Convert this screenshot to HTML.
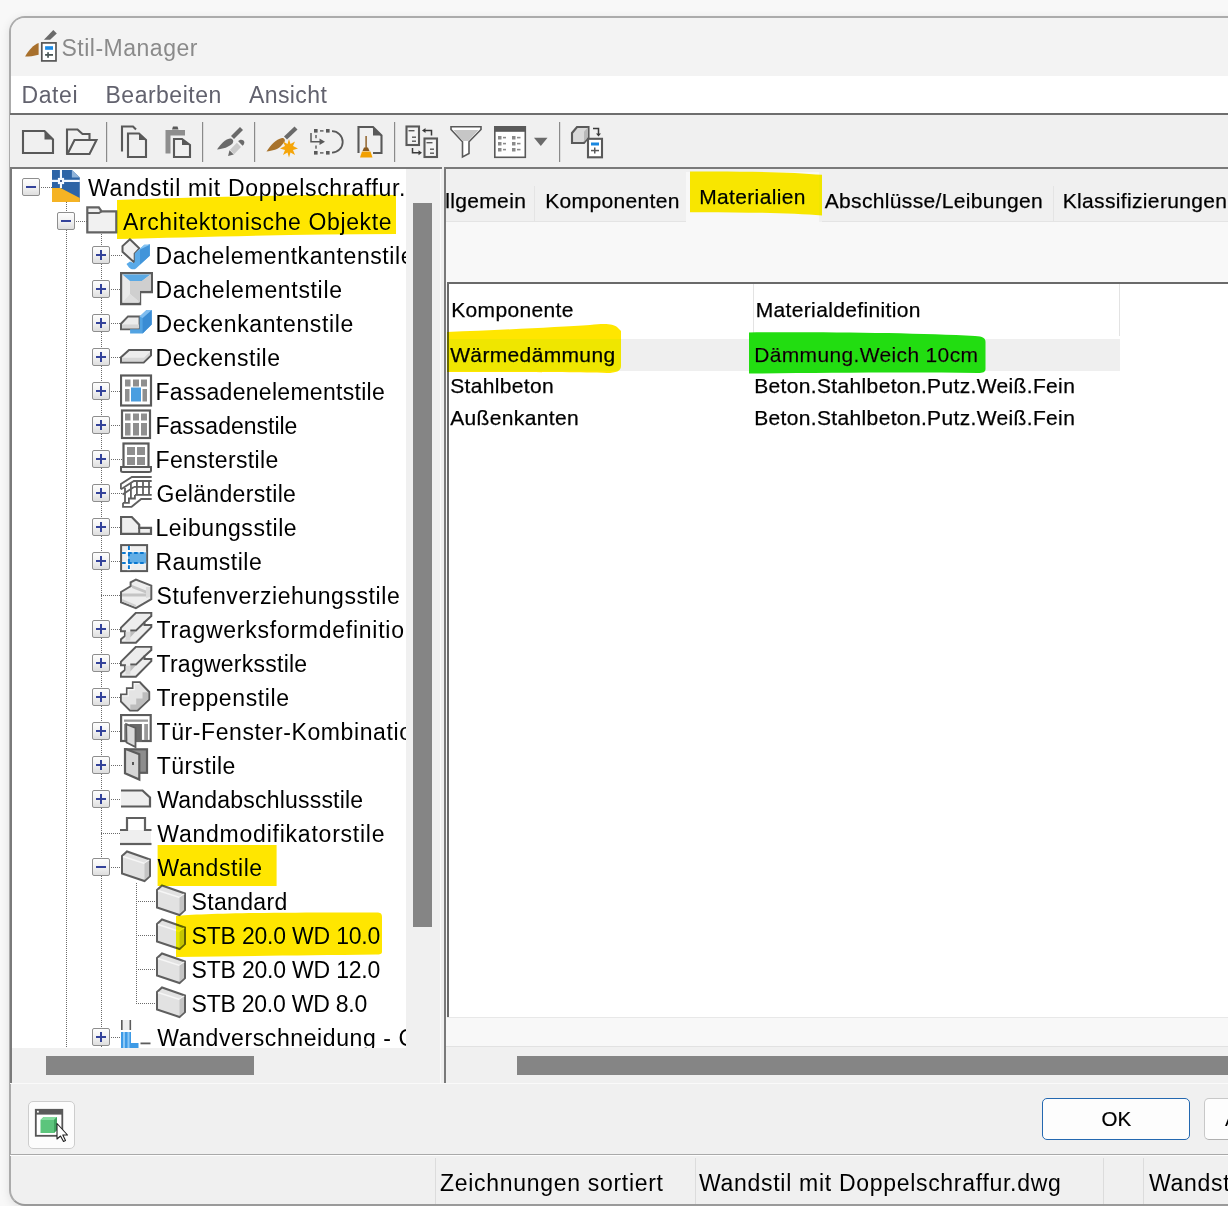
<!DOCTYPE html>
<html><head><meta charset="utf-8">
<style>
*{margin:0;padding:0;box-sizing:border-box}
html,body{width:1228px;height:1206px;overflow:hidden;background:#f8f8f8;font-family:"Liberation Sans",sans-serif;position:relative}
.a{position:absolute}
.t{position:absolute;white-space:nowrap;line-height:1}
.tr{font-size:23px;color:#000;letter-spacing:0.35px}
.rp{font-size:21px;color:#000;letter-spacing:0.35px;-webkit-text-stroke:0.25px #000}
.sb{font-size:23px;color:#000;letter-spacing:0.7px}
.dv{position:absolute;width:1px;background:repeating-linear-gradient(to bottom,#6a6a6a 0 1px,transparent 1px 2px)}
.dh{position:absolute;height:1px;background:repeating-linear-gradient(to right,#6a6a6a 0 1px,transparent 1px 2px)}
.ex{position:absolute;width:18px;height:18px;border:1px solid #8e8e8e;border-radius:2px;background:linear-gradient(to bottom,#fdfdfd 0,#f2f2f2 50%,#dedede 100%)}
.hm{position:absolute;left:3px;top:7px;width:10px;height:2px;background:#34439a}
.vm{position:absolute;left:7px;top:3px;width:2px;height:10px;background:#34439a}
</style></head><body>
<div class="a" style="left:9px;top:16px;width:1240px;height:1190px;border:2px solid #ababab;border-bottom:2px solid #9a9a9a;border-radius:16px;background:#f0f0f0;overflow:hidden;box-shadow:0 2px 10px rgba(0,0,0,0.10)">
  <div class="a" style="left:0;top:0;width:1240px;height:59px;background:#f3f3f3"></div>
</div>

<svg class="a" style="left:20px;top:28px" width="42" height="38" viewBox="20 28 42 38">
 <path d="M43.9 39.7L53.3 30.1L56.8 33.4L50.1 39.7Z" fill="#6a6a6a"/>
 <path d="M25.1 56.6C29 50 33.5 45 38.6 43.1V54.7C34 56 29 56.6 25.1 56.6Z" fill="#a8702c"/>
 <rect x="41.8" y="42.9" width="14.2" height="18" fill="#fff" stroke="#555" stroke-width="1.7"/>
 <rect x="45.1" y="46.2" width="7.9" height="3.6" fill="#1a8ae6"/>
 <rect x="45.1" y="54" width="7.9" height="1.8" fill="#4a5656"/><rect x="47.2" y="52.2" width="1.7" height="5.6" fill="#4a5656"/>
</svg>

<div class="t" style="left:61.5px;top:36.6px;font-size:23px;color:#8a8a8a;letter-spacing:0.5px">Stil-Manager</div>
<div class="a" style="left:11px;top:76px;width:1217px;height:37px;background:#fff"></div>
<div class="t" style="left:21.5px;top:83.8px;font-size:23px;color:#62626e;letter-spacing:0.6px">Datei</div>
<div class="t" style="left:105.5px;top:83.8px;font-size:23px;color:#62626e;letter-spacing:0.5px">Bearbeiten</div>
<div class="t" style="left:249px;top:83.8px;font-size:23px;color:#62626e;letter-spacing:0.4px">Ansicht</div>
<div class="a" style="left:10px;top:113px;width:1218px;height:2px;background:#6e6e6e"></div>
<div class="a" style="left:10px;top:115px;width:1218px;height:52px;background:#f0f0f0"></div>

<svg class="a" style="left:10px;top:115px" width="600" height="52" viewBox="10 115 600 52">
 <!-- new doc -->
 <path d="M23 131H44.5L53 139.5V153H23Z" fill="none" stroke="#595959" stroke-width="2.1"/>
 <path d="M44.5 131L53 139.5H44.5Z" fill="#595959"/>
 <!-- open folder -->
 <path d="M89.5 139V134H82.5L77.5 129.5H67V154" fill="none" stroke="#595959" stroke-width="2.1"/>
 <path d="M74.5 140H96.5L89.5 154H67.5Z" fill="none" stroke="#595959" stroke-width="2.1"/>
 <rect x="106" y="122" width="1.2" height="40" fill="#8a8a8a"/>
 <!-- copy -->
 <path d="M122 151.5V126.5H133L136 129.5" fill="none" stroke="#595959" stroke-width="2.1"/>
 <path d="M128 133.5H139L146 140V157H128Z" fill="#f0f0f0" stroke="#595959" stroke-width="2.1"/>
 <path d="M139 133.5L146 140H139Z" fill="#595959"/>
 <!-- paste -->
 <path d="M165.5 130H185V135.5H170.5V153.5H165.5Z" fill="#8e8e8e"/>
 <path d="M172 129.5L173 126.5H177.5L178.5 129.5Z" fill="#595959"/>
 <path d="M174 139H182L190 145V157H174Z" fill="#f0f0f0" stroke="#595959" stroke-width="2.1"/>
 <path d="M182 139L190 145H182Z" fill="#595959"/>
 <rect x="202" y="122" width="1.2" height="40" fill="#8a8a8a"/>
 <!-- brush + pencil -->
 <path d="M231 136L240 127L243 130L234 139Z" fill="#6a6a6a"/>
 <path d="M217 149.5C220 145 225 139 230 138.5C233 138.5 234 141 232.5 143.5C229 147 223 149 217 149.5Z" fill="#6a6a6a"/>
 <path d="M230 149.8L236.9 142.8L241 146.9L234.1 154.2Z" fill="#c9c9c9"/>
 <path d="M238.2 141.2C239.5 139.5 242 139.2 243.5 140.6C245 142 244.6 144.4 242.6 145.7Z" fill="#6a6a6a"/>
 <path d="M229.5 150.2L233.8 154.5L228.1 155.9Z" fill="#6a6a6a"/>
 <rect x="254" y="122" width="1.2" height="40" fill="#8a8a8a"/>
 <!-- brush star -->
 <path d="M284 136.5L294.5 126.5L297.5 129.5L287 139.5Z" fill="#6a6a6a"/>
 <path d="M266.5 151.5C270 146 276 139 282 138C284.5 138 285.5 140 284.5 142L281 146C279 149 272 151 266.5 151.5Z" fill="#a8732c"/>
 <path d="M289 139L290.5 144L295 141.5L293 146L298 148.5L293 150L295 155L290.5 152.5L289 157.5L287.5 152.5L283 155L285 150L280 148.5L285 146L283 141.5L287.5 144Z" fill="#f5a50a"/>
 <!-- dashed select with arrow -->
 <g fill="#595959">
  <rect x="314" y="129" width="3.6" height="3.6"/><rect x="326" y="129" width="3.6" height="3.6"/>
  <rect x="314" y="151" width="3.6" height="3.6"/><rect x="326" y="151" width="3.6" height="3.6"/>
  <rect x="320" y="130.2" width="3.5" height="1.4"/><rect x="320" y="152.2" width="3.5" height="1.4"/>
  <rect x="315.3" y="135" width="1.4" height="3.2"/><rect x="315.3" y="145.5" width="1.4" height="3.2"/>
 </g>
 <path d="M332 131.2A10.6 10.6 0 0 1 332 152.6" fill="none" stroke="#595959" stroke-width="1.8"/>
 <path d="M311 133V141.7H320" fill="none" stroke="#595959" stroke-width="1.5"/>
 <path d="M319.5 138.5L325 141.7L319.5 145Z" fill="#595959"/>
 <!-- doc with broom -->
 <path d="M358.5 153V127H373L381.5 135.5V153H373" fill="none" stroke="#595959" stroke-width="2.1"/>
 <path d="M373 127L381.5 135.5H373Z" fill="#595959"/>
 <rect x="365.4" y="136" width="1.4" height="12" fill="#8a5a1e"/>
 <path d="M364 147.5H368L369.5 151H362.5Z" fill="#8a5a1e"/>
 <path d="M362 151.5H370.5L372.5 157.5H360Z" fill="#f2a000"/>
 <rect x="394" y="122" width="1.2" height="40" fill="#8a8a8a"/>
 <!-- docs swap -->
 <rect x="406.5" y="126.5" width="12.5" height="18.5" fill="#f4f4f4" stroke="#595959" stroke-width="2.1"/>
 <rect x="408.5" y="130" width="6" height="1.4" fill="#595959"/><rect x="412" y="136.5" width="4" height="1.4" fill="#595959"/><rect x="412" y="140.5" width="4" height="1.4" fill="#595959"/>
 <rect x="424.5" y="138.5" width="12.5" height="18.5" fill="#f4f4f4" stroke="#595959" stroke-width="2.1"/>
 <rect x="426.5" y="142" width="6" height="1.4" fill="#595959"/><rect x="430" y="148.5" width="4" height="1.4" fill="#595959"/><rect x="430" y="152.5" width="4" height="1.4" fill="#595959"/>
 <path d="M431.5 135.5V130.5H425" fill="none" stroke="#3a3a3a" stroke-width="1.5"/><path d="M425.5 128L422 130.5L425.5 133Z" fill="#3a3a3a"/>
 <path d="M412.5 148V152.8H419" fill="none" stroke="#3a3a3a" stroke-width="1.5"/><path d="M418.5 150.3L422 152.8L418.5 155.3Z" fill="#3a3a3a"/>
 <!-- funnel -->
 <path d="M451 126.8H481V129.5L469 141.8V153.5L462.5 157V141.8L451 129.5Z" fill="#fff" stroke="#595959" stroke-width="1.6"/>
 <path d="M453.5 130H478.5L468.5 141H462.5Z" fill="#c6c6c6"/>
 <!-- table -->
 <rect x="494.8" y="126.8" width="30.5" height="30.5" fill="#fff" stroke="#595959" stroke-width="1.6"/>
 <rect x="494" y="126" width="32" height="5.8" fill="#595959"/>
 <g fill="#8a8a8a">
  <rect x="498" y="136" width="3.5" height="3.5"/><rect x="503" y="136.8" width="3" height="1.6"/><rect x="512" y="136" width="3.5" height="3.5"/><rect x="517" y="136.8" width="3.5" height="1.6"/>
  <rect x="498" y="142" width="3.5" height="3.5"/><rect x="503" y="142.8" width="3" height="1.6"/><rect x="512" y="142" width="3.5" height="3.5"/><rect x="517" y="142.8" width="3.5" height="1.6"/>
  <rect x="498" y="148" width="3.5" height="3.5"/><rect x="503" y="148.8" width="3" height="1.6"/><rect x="512" y="148" width="3.5" height="3.5"/><rect x="517" y="148.8" width="3.5" height="1.6"/>
 </g>
 <path d="M534 137.8H547.5L540.8 146Z" fill="#6a6a6a"/>
 <rect x="559" y="122" width="1.2" height="40" fill="#8a8a8a"/>
 <!-- cube + doc -->
 <path d="M572 133L577 127H588.5V137.5L584 143H572Z" fill="#d9d9d9" stroke="#595959" stroke-width="2.1"/>
 <path d="M584 131.5L588 127.5V137.5L584 142Z" fill="#b8b8b8"/>
 <path d="M593 128.5H598.5V134" fill="none" stroke="#3a3a3a" stroke-width="1.5"/><path d="M596 133.5L598.5 136.5L601 133.5Z" fill="#3a3a3a"/>
 <rect x="588" y="138.8" width="14" height="18.5" fill="#fff" stroke="#595959" stroke-width="2.1"/>
 <rect x="591" y="142.5" width="8" height="3" fill="#1a88e0"/>
 <rect x="591" y="149.8" width="8" height="1.5" fill="#595959"/><rect x="594" y="147.5" width="1.5" height="6" fill="#595959"/>
</svg>

<div class="a" style="left:10px;top:167px;width:432px;height:916px;border:2px solid #7a7a7a;border-right:none;border-bottom:none;background:#f0f0f0"></div>
<div class="a" style="left:12px;top:169px;width:394px;height:879px;background:#fff;overflow:hidden">
 <div class="a" style="left:-12px;top:-169px;width:1228px;height:1206px">
<div class="dv" style="left:65.5px;top:202px;height:846px"></div>
<div class="dv" style="left:100.5px;top:234px;height:814px"></div>
<div class="dv" style="left:135.5px;top:883px;height:121px"></div>
<div class="dh" style="left:31px;top:186.5px;width:21px"></div>
<div class="dh" style="left:66px;top:220.5px;width:21px"></div>
<div class="dh" style="left:101px;top:254.5px;width:21px"></div>
<div class="dh" style="left:101px;top:288.5px;width:21px"></div>
<div class="dh" style="left:101px;top:322.5px;width:21px"></div>
<div class="dh" style="left:101px;top:356.5px;width:21px"></div>
<div class="dh" style="left:101px;top:390.5px;width:21px"></div>
<div class="dh" style="left:101px;top:424.5px;width:21px"></div>
<div class="dh" style="left:101px;top:458.5px;width:21px"></div>
<div class="dh" style="left:101px;top:492.5px;width:21px"></div>
<div class="dh" style="left:101px;top:526.5px;width:21px"></div>
<div class="dh" style="left:101px;top:560.5px;width:21px"></div>
<div class="dh" style="left:101px;top:594.5px;width:21px"></div>
<div class="dh" style="left:101px;top:628.5px;width:21px"></div>
<div class="dh" style="left:101px;top:662.5px;width:21px"></div>
<div class="dh" style="left:101px;top:696.5px;width:21px"></div>
<div class="dh" style="left:101px;top:730.5px;width:21px"></div>
<div class="dh" style="left:101px;top:764.5px;width:21px"></div>
<div class="dh" style="left:101px;top:798.5px;width:21px"></div>
<div class="dh" style="left:101px;top:832.5px;width:21px"></div>
<div class="dh" style="left:101px;top:866.5px;width:21px"></div>
<div class="dh" style="left:136px;top:900.5px;width:21px"></div>
<div class="dh" style="left:136px;top:934.5px;width:21px"></div>
<div class="dh" style="left:136px;top:968.5px;width:21px"></div>
<div class="dh" style="left:136px;top:1002.5px;width:21px"></div>
<div class="dh" style="left:101px;top:1036.5px;width:21px"></div>
<div class="ex" style="left:22px;top:178px"><i class="hm"></i></div>
<svg class="a" style="left:50px;top:170px" width="33" height="35" viewBox="0 0 33 35"><path d="M2 0H21.9L29.8 7.6V31.9H2Z" fill="#2d64a6"/><path d="M21.9 0L29.8 7.6H21.9Z" fill="#8fb3da"/>
   <path d="M2 18H10.5L29.8 27.9V31.9H2Z" fill="#f5b324"/>
   <rect x="9.9" y="0" width="2.1" height="18" fill="#f4f8ff"/><rect x="2" y="9.8" width="27.8" height="2.2" fill="#f4f8ff"/>
   <rect x="7.9" y="7.9" width="6.2" height="6.2" fill="#f4f8ff"/><rect x="10.1" y="10.1" width="1.8" height="1.8" fill="#1e3f7a"/></svg>
<div class="t tr" style="left:88px;top:177.1px;letter-spacing:0.7px">Wandstil mit Doppelschraffur.</div>
<div class="ex" style="left:57px;top:212px"><i class="hm"></i></div>
<svg class="a" style="left:85px;top:204px" width="33" height="35" viewBox="0 0 33 35"><path d="M2.3 3.4H13.8L16.6 7.4H31.3V28.4H2.3Z" fill="#f1f1f1" stroke="#636363" stroke-width="2.2"/>
   <path d="M2.3 9H14L16.8 7.2" fill="none" stroke="#636363" stroke-width="2"/></svg>
<div class="t tr" style="left:123px;top:211.1px;letter-spacing:0.61px">Architektonische Objekte</div>
<div class="ex" style="left:92px;top:246px"><i class="hm"></i><i class="vm"></i></div>
<svg class="a" style="left:120px;top:238px" width="33" height="35" viewBox="0 0 33 35"><path d="M9.9 1.3L19.5 10.5L14.7 15.6V24H13.8L2.5 13.8V8.1Z" fill="#f0f0f0" stroke="#5a5a5a" stroke-width="2"/>
   <path d="M14.7 15.6L24.3 6.7H29.8V17.7L16 30.5C14 32 11 31.5 9 29.5L6.5 26L10 23.5L13.8 25L14.7 24Z" fill="#5aaae8"/>
   <path d="M20 11L29.8 6V17.7L20 26.5Z" fill="#4295da"/>
   <path d="M14.7 15.6L24.3 6.7H29.8L20 11.5Z" fill="#86c4f2"/></svg>
<div class="t tr" style="left:155.5px;top:245.1px;letter-spacing:0.6px">Dachelementkantenstile</div>
<div class="ex" style="left:92px;top:280px"><i class="hm"></i><i class="vm"></i></div>
<svg class="a" style="left:120px;top:272px" width="33" height="35" viewBox="0 0 33 35"><path d="M1 1H32V20H20V32H1Z" fill="#e9e9e9" stroke="#5c5c5c" stroke-width="2.4"/>
   <path d="M2.5 2.5H30.5L22 9H10Z" fill="#5ba9e4"/>
   <path d="M10 9H22L30.5 2.5V18.5H20V30.5L10 22Z" fill="#cfcfcf"/>
   <path d="M10 22L20 30.5H2.5Z" fill="#dedede"/></svg>
<div class="t tr" style="left:155.5px;top:279.1px;letter-spacing:0.67px">Dachelementstile</div>
<div class="ex" style="left:92px;top:314px"><i class="hm"></i><i class="vm"></i></div>
<svg class="a" style="left:120px;top:306px" width="33" height="35" viewBox="0 0 33 35"><path d="M1 17.7L8 10.4H19.6V23.3H1Z" fill="#ececec" stroke="#5f5f5f" stroke-width="2"/>
   <path d="M2 18.5H19V22.3H2Z" fill="#d5d5d5"/>
   <path d="M19.6 10.4L26.5 3.9H31.7V18.6L22.6 27.6H10.1V23.3H19.6Z" fill="#52a3e2"/>
   <path d="M22.6 12V27.6L31.7 18.6V3.9Z" fill="#3a8cd4"/><path d="M19.6 10.4L26.5 3.9H31.7L22.6 12Z" fill="#7fbdf0"/></svg>
<div class="t tr" style="left:155.5px;top:313.1px;letter-spacing:0.61px">Deckenkantenstile</div>
<div class="ex" style="left:92px;top:348px"><i class="hm"></i><i class="vm"></i></div>
<svg class="a" style="left:120px;top:340px" width="33" height="35" viewBox="0 0 33 35"><path d="M1 17.3L9 9.9H31V15.3L23.7 22.5H1Z" fill="#ededed" stroke="#5a5a5a" stroke-width="2"/>
   <path d="M2 17.8H24L30 12V15L23.3 21.5H2Z" fill="#d6d6d6"/></svg>
<div class="t tr" style="left:155.5px;top:347.1px;letter-spacing:0.57px">Deckenstile</div>
<div class="ex" style="left:92px;top:382px"><i class="hm"></i><i class="vm"></i></div>
<svg class="a" style="left:120px;top:374px" width="33" height="35" viewBox="0 0 33 35"><rect x="1" y="1.5" width="30" height="30" fill="#fff" stroke="#5a5a5a" stroke-width="2.2"/>
   <rect x="5" y="5.5" width="5.5" height="7" fill="#8f8f8f"/><rect x="13" y="5.5" width="6" height="7" fill="#8f8f8f"/><rect x="21" y="5.5" width="6" height="7" fill="#8f8f8f"/>
   <rect x="5" y="15" width="4.5" height="12.5" fill="#8f8f8f"/><rect x="22.5" y="15" width="4.5" height="12.5" fill="#8f8f8f"/>
   <rect x="11" y="13.5" width="10" height="14" fill="#4a9ee0"/></svg>
<div class="t tr" style="left:155.5px;top:381.1px;letter-spacing:0.29px">Fassadenelementstile</div>
<div class="ex" style="left:92px;top:416px"><i class="hm"></i><i class="vm"></i></div>
<svg class="a" style="left:120px;top:408px" width="33" height="35" viewBox="0 0 33 35"><rect x="2" y="2.5" width="28" height="27.5" fill="#fff" stroke="#5a5a5a" stroke-width="2.2"/>
   <rect x="5" y="5.5" width="5.5" height="7" fill="#8f8f8f"/><rect x="13" y="5.5" width="6" height="7" fill="#8f8f8f"/><rect x="21" y="5.5" width="6" height="7" fill="#8f8f8f"/>
   <rect x="5" y="15" width="5.5" height="12.5" fill="#8f8f8f"/><rect x="13" y="15" width="6" height="12.5" fill="#8f8f8f"/><rect x="21" y="15" width="6" height="12.5" fill="#8f8f8f"/></svg>
<div class="t tr" style="left:155.5px;top:415.1px;letter-spacing:0px">Fassadenstile</div>
<div class="ex" style="left:92px;top:450px"><i class="hm"></i><i class="vm"></i></div>
<svg class="a" style="left:120px;top:442px" width="33" height="35" viewBox="0 0 33 35"><rect x="3.5" y="1.5" width="25" height="24" fill="#fff" stroke="#5a5a5a" stroke-width="2.2"/>
   <rect x="7" y="5" width="8" height="8" fill="#8f8f8f"/><rect x="17" y="5" width="8" height="8" fill="#8f8f8f"/>
   <rect x="7" y="15" width="8" height="8" fill="#8f8f8f"/><rect x="17" y="15" width="8" height="8" fill="#8f8f8f"/>
   <path d="M1 25H31V28.5C31 29.5 30 30 29 30H3C2 30 1 29.5 1 28.5Z" fill="#f4f4f4" stroke="#5a5a5a" stroke-width="2"/></svg>
<div class="t tr" style="left:155.5px;top:449.1px;letter-spacing:0.35px">Fensterstile</div>
<div class="ex" style="left:92px;top:484px"><i class="hm"></i><i class="vm"></i></div>
<svg class="a" style="left:120px;top:476px" width="33" height="35" viewBox="0 0 33 35"><g fill="none" stroke="#5f5f5f" stroke-width="1.8">
   <path d="M0.9 13.2V8.1L11.9 1H31.7"/><path d="M0.9 13.2L2.6 12.3L13.9 5H31.7"/>
   <path d="M13.9 10.9H31.7"/><path d="M2.6 18.6L13.9 10.9"/><path d="M15 18.9H31.7"/>
   <path d="M5 12V27"/><path d="M10.9 6.5V22.5"/><path d="M16.9 5V18.9"/><path d="M23 5V18.9"/><path d="M29 5V18.9"/>
   <path d="M3 26.8H8.9V22.5H14.9V18.9"/><path d="M3 26.8V30.8H11.6L21.2 23H31.7"/></g></svg>
<div class="t tr" style="left:156.5px;top:483.1px;letter-spacing:0.32px">Geländerstile</div>
<div class="ex" style="left:92px;top:518px"><i class="hm"></i><i class="vm"></i></div>
<svg class="a" style="left:120px;top:510px" width="33" height="35" viewBox="0 0 33 35"><path d="M1 7H11.8L19.2 14.8V17.8H31V23.9H1Z" fill="#efefef" stroke="#5c5c5c" stroke-width="2.2"/><path d="M19.2 17.8V23.9" stroke="#5c5c5c" stroke-width="2"/></svg>
<div class="t tr" style="left:155.5px;top:517.1px;letter-spacing:0.57px">Leibungsstile</div>
<div class="ex" style="left:92px;top:552px"><i class="hm"></i><i class="vm"></i></div>
<svg class="a" style="left:120px;top:544px" width="33" height="35" viewBox="0 0 33 35"><rect x="1.1" y="1.1" width="26" height="26" fill="#efefef" stroke="#5a5a5a" stroke-width="2"/>
   <rect x="7" y="2.1" width="3.8" height="24" fill="#fbfbfb"/><rect x="2.1" y="7.4" width="24" height="3" fill="#fbfbfb"/><rect x="2.1" y="17.4" width="24" height="3" fill="#fbfbfb"/>
   <rect x="8.1" y="8.3" width="18" height="11.2" fill="#62aee6"/>
   <g stroke="#0a78d0" stroke-width="2"><path d="M2.1 8.9H26" stroke-dasharray="3.6 2.4"/><path d="M2.1 18.9H26" stroke-dasharray="3.6 2.4"/><path d="M8.9 2.1V26" stroke-dasharray="3.8 2.6"/></g></svg>
<div class="t tr" style="left:155.5px;top:551.1px;letter-spacing:0.5px">Raumstile</div>
<svg class="a" style="left:120px;top:578px" width="33" height="35" viewBox="0 0 33 35"><path d="M1 14L10.6 8.3V4.3L15.9 1.6L31.3 7.6V21.2L15.9 30.2L1 24.2Z" fill="#eeeeee" stroke="#5f5f5f" stroke-width="2"/>
   <path d="M12 7L26 12.5V15.5L12 10Z" fill="#c4c4c4"/><path d="M2 15.5H26V18.5H2Z" fill="#c4c4c4"/>
   <path d="M26 9V20L30 19V9Z" fill="#dcdcdc"/><path d="M2 21L16 27V29L2 23.5Z" fill="#d0d0d0"/></svg>
<div class="t tr" style="left:156.5px;top:585.1px;letter-spacing:0.56px">Stufenverziehungsstile</div>
<div class="ex" style="left:92px;top:620px"><i class="hm"></i><i class="vm"></i></div>
<svg class="a" style="left:120px;top:612px" width="33" height="35" viewBox="0 0 33 35"><path d="M0.8 15.9L15.9 0.8H31.3V4L24.5 10.3V12.9H31.3V15.2L15.9 30.8H0.8V27.5L4.95 23.9V19.2H0.8Z" fill="#ededed" stroke="#5a5a5a" stroke-width="2"/>
   <path d="M5.5 19.8H10.3V28.5H5.5Z" fill="#dadada"/><path d="M10.3 19.8H15.5L10.3 25.5Z" fill="#bdbdbd"/>
   <path d="M10.3 18.6H15.9L24.5 10.3" fill="none" stroke="#5a5a5a" stroke-width="2"/></svg>
<div class="t tr" style="left:156.5px;top:619.1px;letter-spacing:0.75px">Tragwerksformdefinitionen</div>
<div class="ex" style="left:92px;top:654px"><i class="hm"></i><i class="vm"></i></div>
<svg class="a" style="left:120px;top:646px" width="33" height="35" viewBox="0 0 33 35"><path d="M0.8 15.9L15.9 0.8H31.3V4L24.5 10.3V12.9H31.3V15.2L15.9 30.8H0.8V27.5L4.95 23.9V19.2H0.8Z" fill="#ededed" stroke="#5a5a5a" stroke-width="2"/>
   <path d="M5.5 19.8H10.3V28.5H5.5Z" fill="#dadada"/><path d="M10.3 19.8H15.5L10.3 25.5Z" fill="#bdbdbd"/>
   <path d="M10.3 18.6H15.9L24.5 10.3" fill="none" stroke="#5a5a5a" stroke-width="2"/></svg>
<div class="t tr" style="left:156.5px;top:653.1px;letter-spacing:0.25px">Tragwerksstile</div>
<div class="ex" style="left:92px;top:688px"><i class="hm"></i><i class="vm"></i></div>
<svg class="a" style="left:120px;top:680px" width="33" height="35" viewBox="0 0 33 35"><path d="M0.8 14.4H6.9V8.3H12.9V2.3H19.9L29.2 12V19.6L17.6 30.6H10L0.8 21.5Z" fill="#e4e4e4" stroke="#5a5a5a" stroke-width="2"/>
   <path d="M10.3 24.5H16.2V18.6H22.5V12.3H28.2V19.2L17.2 29.6H10.3Z" fill="#bdbdbd"/>
   <path d="M2 15.8H8.2V9.7H14.2V3.7H19.5" fill="none" stroke="#f6f6f6" stroke-width="1.3"/></svg>
<div class="t tr" style="left:156.5px;top:687.1px;letter-spacing:0.62px">Treppenstile</div>
<div class="ex" style="left:92px;top:722px"><i class="hm"></i><i class="vm"></i></div>
<svg class="a" style="left:120px;top:714px" width="33" height="35" viewBox="0 0 33 35"><rect x="1.1" y="1" width="29.6" height="26" fill="#fff" stroke="#5c5c5c" stroke-width="2.2"/>
   <rect x="4" y="5.5" width="24" height="2.3" fill="#999"/><rect x="4" y="10" width="2" height="16" fill="#999"/><rect x="24.2" y="10" width="3.8" height="16" fill="#999"/>
   <rect x="9.4" y="10" width="12.5" height="18" fill="#6a6a6a"/>
   <path d="M6.2 10.2L15.5 14V33L6.5 28.5Z" fill="#dadada" stroke="#5c5c5c" stroke-width="1.8"/></svg>
<div class="t tr" style="left:156.5px;top:721.1px;letter-spacing:0.6px">Tür-Fenster-Kombinationsstile</div>
<div class="ex" style="left:92px;top:756px"><i class="hm"></i><i class="vm"></i></div>
<svg class="a" style="left:120px;top:748px" width="33" height="35" viewBox="0 0 33 35"><rect x="5.5" y="1.3" width="21.5" height="23.5" fill="#8d8d8d" stroke="#5c5c5c" stroke-width="2.2"/>
   <path d="M5 0.8L19.3 6.2V31.5L5 25.3Z" fill="#d6d6d6" stroke="#5c5c5c" stroke-width="2.2"/><rect x="12" y="14" width="2" height="3" fill="#555"/></svg>
<div class="t tr" style="left:156.7px;top:755.1px;letter-spacing:0.46px">Türstile</div>
<div class="ex" style="left:92px;top:790px"><i class="hm"></i><i class="vm"></i></div>
<svg class="a" style="left:120px;top:782px" width="33" height="35" viewBox="0 0 33 35"><path d="M1 8.5H22.5L30 15.5V24.5H1Z" fill="#efefef"/><path d="M1 8.5H22.5L30 15.5V24.5H1" fill="none" stroke="#5c5c5c" stroke-width="2.2"/></svg>
<div class="t tr" style="left:157.3px;top:789.1px;letter-spacing:0.2px">Wandabschlussstile</div>
<svg class="a" style="left:120px;top:816px" width="33" height="35" viewBox="0 0 33 35"><path d="M0 14H31V28H0Z" fill="#efefef"/><path d="M0 14H7V2H25V14H31.5" fill="none" stroke="#606060" stroke-width="2.2"/><path d="M0 28H31.5" stroke="#606060" stroke-width="2.2"/></svg>
<div class="t tr" style="left:157.3px;top:823.1px;letter-spacing:0.77px">Wandmodifikatorstile</div>
<div class="ex" style="left:92px;top:858px"><i class="hm"></i></div>
<svg class="a" style="left:120px;top:850px" width="33" height="35" viewBox="0 0 33 35"><path d="M2 6L7 1.5L30 9.5V26L24.5 31L2 23.5Z" fill="#e2e2e2" stroke="#5f5f5f" stroke-width="2"/>
   <path d="M3 6.5L24.5 13.5L29 10" fill="none" stroke="#f6f6f6" stroke-width="1.5"/>
   <path d="M24.5 13.5V30L29 26V10.5Z" fill="#c4c4c4"/></svg>
<div class="t tr" style="left:157.5px;top:857.1px;letter-spacing:0.56px">Wandstile</div>
<svg class="a" style="left:155px;top:884px" width="33" height="35" viewBox="0 0 33 35"><path d="M2 6L7 1.5L30 9.5V26L24.5 31L2 23.5Z" fill="#e2e2e2" stroke="#5f5f5f" stroke-width="2"/>
   <path d="M3 6.5L24.5 13.5L29 10" fill="none" stroke="#f6f6f6" stroke-width="1.5"/>
   <path d="M24.5 13.5V30L29 26V10.5Z" fill="#c4c4c4"/></svg>
<div class="t tr" style="left:191.6px;top:891.1px;letter-spacing:0.33px">Standard</div>
<svg class="a" style="left:155px;top:918px" width="33" height="35" viewBox="0 0 33 35"><path d="M2 6L7 1.5L30 9.5V26L24.5 31L2 23.5Z" fill="#e2e2e2" stroke="#5f5f5f" stroke-width="2"/>
   <path d="M3 6.5L24.5 13.5L29 10" fill="none" stroke="#f6f6f6" stroke-width="1.5"/>
   <path d="M24.5 13.5V30L29 26V10.5Z" fill="#c4c4c4"/></svg>
<div class="t tr" style="left:191.6px;top:925.1px;letter-spacing:-0.2px">STB 20.0 WD 10.0</div>
<svg class="a" style="left:155px;top:952px" width="33" height="35" viewBox="0 0 33 35"><path d="M2 6L7 1.5L30 9.5V26L24.5 31L2 23.5Z" fill="#e2e2e2" stroke="#5f5f5f" stroke-width="2"/>
   <path d="M3 6.5L24.5 13.5L29 10" fill="none" stroke="#f6f6f6" stroke-width="1.5"/>
   <path d="M24.5 13.5V30L29 26V10.5Z" fill="#c4c4c4"/></svg>
<div class="t tr" style="left:191.6px;top:959.1px;letter-spacing:-0.2px">STB 20.0 WD 12.0</div>
<svg class="a" style="left:155px;top:986px" width="33" height="35" viewBox="0 0 33 35"><path d="M2 6L7 1.5L30 9.5V26L24.5 31L2 23.5Z" fill="#e2e2e2" stroke="#5f5f5f" stroke-width="2"/>
   <path d="M3 6.5L24.5 13.5L29 10" fill="none" stroke="#f6f6f6" stroke-width="1.5"/>
   <path d="M24.5 13.5V30L29 26V10.5Z" fill="#c4c4c4"/></svg>
<div class="t tr" style="left:191.6px;top:993.1px;letter-spacing:-0.24px">STB 20.0 WD 8.0</div>
<div class="ex" style="left:92px;top:1028px"><i class="hm"></i><i class="vm"></i></div>
<svg class="a" style="left:120px;top:1020px" width="33" height="35" viewBox="0 0 33 35"><rect x="1" y="0" width="1.8" height="10" fill="#5c5c5c"/><rect x="9.3" y="0" width="1.8" height="10" fill="#5c5c5c"/><rect x="2.8" y="0" width="6.5" height="10" fill="#efefef"/>
   <path d="M1 12H11V23H18.5V34H1Z" fill="#3d9ae6"/><rect x="3" y="12" width="2" height="21" fill="#8cc8f5"/><rect x="7.5" y="12" width="2" height="17" fill="#8cc8f5"/>
   <rect x="20.5" y="22.5" width="10" height="1.8" fill="#5c5c5c"/></svg>
<div class="t tr" style="left:157.3px;top:1027.1px;letter-spacing:0.6px">Wandverschneidung - Gebäudeumriss</div>
 </div>
</div>
<div class="a" style="left:440px;top:169px;width:1px;height:914px;background:#fafafa"></div>
<div class="a" style="left:413px;top:203px;width:19px;height:724px;background:#858585"></div>
<div class="a" style="left:46px;top:1056px;width:208px;height:19px;background:#858585"></div>

<div class="a" style="left:444px;top:167px;width:800px;height:916px;border-left:2px solid #7a7a7a;border-top:2px solid #7a7a7a;background:#f0f0f0"></div>
<div class="a" style="left:446px;top:222px;width:800px;height:824px;background:#f8f8f8"></div>
<div class="a" style="left:446px;top:186px;width:89px;height:36px;background:#f0f0f0;border-right:1px solid #e4e4e4;border-bottom:1px solid #e4e4e4"></div>
<div class="a" style="left:535px;top:186px;width:152px;height:36px;background:#f0f0f0;border-right:1px solid #e4e4e4;border-bottom:1px solid #e4e4e4"></div>
<div class="a" style="left:822px;top:186px;width:232px;height:36px;background:#f0f0f0;border-right:1px solid #e4e4e4;border-bottom:1px solid #e4e4e4"></div>
<div class="a" style="left:1054px;top:186px;width:200px;height:36px;background:#f0f0f0;border-bottom:1px solid #e4e4e4"></div>
<div class="a" style="left:686px;top:172px;width:133px;height:50px;background:#f8f8f8"></div>
<div class="t rp" style="left:445.2px;top:190.2px">llgemein</div>
<div class="t rp" style="left:545.2px;top:190.2px">Komponenten</div>
<div class="t rp" style="left:699.2px;top:186.3px">Materialien</div>
<div class="t rp" style="left:824.7px;top:190.2px">Abschlüsse/Leibungen</div>
<div class="t rp" style="left:1062.7px;top:190.2px">Klassifizierungen</div>

<div class="a" style="left:447px;top:282px;width:800px;height:736px;background:#fff;border-top:2px solid #6a6a6a;border-left:2px solid #6a6a6a"></div>
<div class="a" style="left:447px;top:1017px;width:800px;height:1px;background:#e8e8e8"></div>
<div class="a" style="left:753px;top:284px;width:1px;height:52px;background:#e3e3e3"></div>
<div class="a" style="left:1119px;top:284px;width:1px;height:52px;background:#e3e3e3"></div>
<div class="a" style="left:449px;top:339px;width:671px;height:32px;background:#efefef"></div>
<div class="t rp" style="left:451.2px;top:299.2px">Komponente</div>
<div class="t rp" style="left:755.7px;top:299.2px">Materialdefinition</div>
<div class="t rp" style="left:450.2px;top:343.6px">Wärmedämmung</div>
<div class="t rp" style="left:450.2px;top:375.4px">Stahlbeton</div>
<div class="t rp" style="left:450.2px;top:407.2px">Außenkanten</div>
<div class="t rp" style="left:754.2px;top:343.6px">Dämmung.Weich 10cm</div>
<div class="t rp" style="left:754.2px;top:375.4px">Beton.Stahlbeton.Putz.Weiß.Fein</div>
<div class="t rp" style="left:754.2px;top:407.2px">Beton.Stahlbeton.Putz.Weiß.Fein</div>
<div class="a" style="left:446px;top:1046px;width:800px;height:1px;background:#e2e2e2"></div>
<div class="a" style="left:517px;top:1056px;width:720px;height:19px;background:#858585"></div>

<div class="a" style="left:10px;top:1083px;width:1218px;height:1px;background:#fafafa"></div>
<div class="a" style="left:27.5px;top:1101px;width:47.5px;height:48px;background:#fcfcfc;border:1px solid #cdcdcd;border-radius:5px"></div>

<svg class="a" style="left:30px;top:1104px" width="42" height="42" viewBox="30 1104 42 42">
 <rect x="35.8" y="1109.8" width="26.5" height="26" fill="#fff" stroke="#555" stroke-width="1.8"/>
 <rect x="35" y="1109" width="28" height="5.6" fill="#5a5a5a"/><rect x="37" y="1110.8" width="1.8" height="1.8" fill="#fff"/>
 <path d="M40.5 1120L43.5 1117H57V1130L54 1133H40.5Z" fill="#5cc57c"/>
 <path d="M43.5 1117H57L54 1120H40.5Z" fill="#86dda0"/><path d="M54 1120L57 1117V1130L54 1133Z" fill="#3fa45f"/>
 <path d="M57 1123.5V1139L60.5 1136L63.5 1141.5L65.5 1140.5L62.8 1135H67.5Z" fill="#fff" stroke="#222" stroke-width="1.1" stroke-linejoin="round"/>
</svg>

<div class="a" style="left:1042px;top:1098px;width:148px;height:42px;background:#fdfdfd;border:1.5px solid #2468b0;border-radius:5px"></div>
<div class="t" style="left:1101.5px;top:1109px;font-size:20.5px;color:#000;-webkit-text-stroke:0.2px #000">OK</div>
<div class="a" style="left:1204px;top:1098px;width:60px;height:42px;background:#fdfdfd;border:1px solid #c8c8c8;border-bottom-color:#b0b0b0;border-radius:5px"></div>
<div class="t" style="left:1225px;top:1108.6px;font-size:20px;color:#000">Abbrechen</div>

<div class="a" style="left:10px;top:1154px;width:1218px;height:1px;background:#a9a9a9"></div>
<div class="a" style="left:10px;top:1155px;width:1218px;height:1px;background:#fdfdfd"></div>
<div class="a" style="left:435px;top:1158px;width:1px;height:46px;background:#dcdcdc"></div>
<div class="a" style="left:695px;top:1158px;width:1px;height:46px;background:#dcdcdc"></div>
<div class="a" style="left:1103px;top:1158px;width:1px;height:46px;background:#dcdcdc"></div>
<div class="a" style="left:1143px;top:1158px;width:1px;height:46px;background:#dcdcdc"></div>
<div class="t sb" style="left:440px;top:1172px">Zeichnungen sortiert</div>
<div class="t sb" style="left:699px;top:1172px">Wandstil mit Doppelschraffur.dwg</div>
<div class="t sb" style="left:1149px;top:1172px">Wandstil</div>
<svg class="a" style="left:0;top:0;mix-blend-mode:darken" width="1228" height="1206">
 <path d="M117 200C180 198 300 194 396 195V234C300 234 200 237 117 239Z" fill="#ffe600"/>
 <path d="M157.6 845H276.6V886H157.6Z" fill="#ffe600"/>
 <path d="M176 916C200 913 300 912 378 912.5C381 913 382 914 382 917V952C382 954 380 954.5 376 954.5C300 955.5 240 956 176 957Z" fill="#ffe600"/>
 <path d="M690 171.5C740 171 790 172 822 174.8V215.5C790 213 740 212 690 212.2Z" fill="#ffe600"/>
 <path d="M447 332C500 330 560 327 590 325C606 323 613 324 617 327L621 331V366C621 371 616 373 607 373C570 372 500 372 447 372Z" fill="#ffe600"/>
 <path d="M749 332.4C830 332 920 333 975 336C983 336.5 985.5 338 985.5 342V369C985.5 372 983 373 978 373C900 372 820 373 749 373.5Z" fill="#22dd11"/>
</svg>
</body></html>
